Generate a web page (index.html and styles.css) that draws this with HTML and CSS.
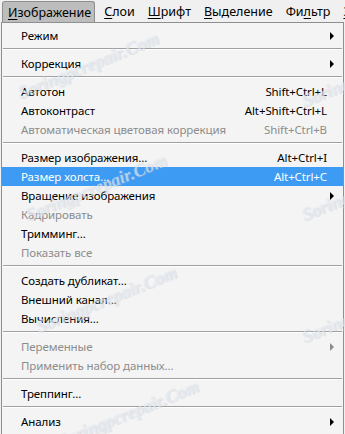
FILE: index.html
```html
<!DOCTYPE html>
<html lang="ru">
<head>
    <meta charset="UTF-8">
    <title>Изображение</title>
    <link rel="stylesheet" href="styles.css">
</head>
<body>
    <nav class="menubar">
        <span class="top active"><u>И</u>зображение</span>
        <span class="top"><u>С</u>лои</span>
        <span class="top"><u>Ш</u>рифт</span>
        <span class="top"><u>В</u>ыделение</span>
        <span class="top">Фи<u>л</u>ьтр</span>
        <span class="top"><u>З</u></span>
    </nav>
    <div class="menu">
        <div class="item sub">Режим</div>
        <div class="sep"></div>
        <div class="item sub">Коррекция</div>
        <div class="sep"></div>
        <div class="item">Автотон<span class="key">Shift+Ctrl+L</span></div>
        <div class="item">Автоконтраст<span class="key">Alt+Shift+Ctrl+L</span></div>
        <div class="item off">Автоматическая цветовая коррекция<span class="key">Shift+Ctrl+B</span></div>
        <div class="sep"></div>
        <div class="item">Размер изображения...<span class="key">Alt+Ctrl+I</span></div>
        <div class="item hot">Размер холста...<span class="key">Alt+Ctrl+C</span></div>
        <div class="item sub">Вращение изображения</div>
        <div class="item off">Кадрировать</div>
        <div class="item">Тримминг...</div>
        <div class="item off">Показать все</div>
        <div class="sep"></div>
        <div class="item">Создать дубликат...</div>
        <div class="item">Внешний канал...</div>
        <div class="item">Вычисления...</div>
        <div class="sep"></div>
        <div class="item off sub">Переменные</div>
        <div class="item off">Применить набор данных...</div>
        <div class="sep"></div>
        <div class="item">Треппинг...</div>
        <div class="sep"></div>
        <div class="item sub">Анализ</div>
    </div>

    <!-- водяной знак поверх меню -->
    <div class="wm" style="left: 22px; top: 84px;">Soringpcrepair.Com</div>
    <div class="wm" style="left: 30px; top: 206px;">Soringpcrepair.Com</div>
    <div class="wm" style="left: 40px; top: 318px;">Soringpcrepair.Com</div>
    <div class="wm" style="left: 62px; top: 432px;">Soringpcrepair.Com</div>
    <div class="wm" style="left: 306px; top: 92px;">Soringpcrepair.Com</div>
    <div class="wm" style="left: 306px; top: 206px;">Soringpcrepair.Com</div>
    <div class="wm" style="left: 306px; top: 328px;">Soringpcrepair.Com</div>
</body>
</html>
```

FILE: styles.css
```css
html, body {
    margin: 0;
    height: 100%;
    overflow: hidden;
}
body {
    position: relative;
    background: #f0f0f0;
    font-family: "Noto Sans", "DejaVu Sans", sans-serif;
    font-size: 11.5px;
    letter-spacing: -0.1px;
    color: #000;
}
u {
    text-decoration: underline;
    text-underline-offset: 2px;
}
.menubar {
    display: flex;
    height: 22px;
    padding-left: 2px;
    background: #f0f0f0;
    font-size: 12.5px;
    letter-spacing: 0;
    white-space: nowrap;
}
.top {
    padding: 3px 6px 0 7px;
    line-height: 17px;
}
.top.active {
    margin-top: 1px;
    padding: 2px 3px 0 5px;
    background: #bdbdbd;
    border: 1px solid #8e8e8e;
    border-bottom: 0;
    border-radius: 3px 3px 0 0;
}
.top.active + .top {
    padding-left: 9px;
}
.menu {
    margin-left: 1px;
    width: 341px;
    height: 420px;
    padding-top: 3px;
    background: #f4f4f4;
    border: 1px solid #8f8f8f;
}
.item {
    position: relative;
    display: flex;
    justify-content: space-between;
    height: 19px;
    line-height: 19px;
    padding: 0 16px 0 19px;
    white-space: nowrap;
}
.off {
    color: #8c8c8c;
}
.hot {
    background: #3d9bf4;
    color: #fff;
}
.sub::after {
    content: "";
    position: absolute;
    right: 9px;
    top: 6px;
    border: 4px solid transparent;
    border-left: 4px solid #000;
    border-right: 0;
}
.off.sub::after {
    border-left-color: #8c8c8c;
}
.sep {
    height: 9px;
    margin: 0 1px;
    box-sizing: border-box;
    border-top: 3px solid transparent;
    background: linear-gradient(#a0a0a0 1px, #fff 1px, #fff 2px, transparent 2px);
    background-clip: content-box;
}
.wm {
    position: absolute;
    transform: rotate(-22deg);
    transform-origin: left bottom;
    font-family: "Liberation Serif", serif;
    font-style: italic;
    font-weight: bold;
    font-size: 18px;
    letter-spacing: 0;
    line-height: 1;
    white-space: nowrap;
    color: rgba(255, 255, 255, 0.5);
    text-shadow: 0 0 1px rgba(150, 165, 190, 0.4), 1px 1px 0 rgba(170, 180, 200, 0.2);
    pointer-events: none;
}
```
